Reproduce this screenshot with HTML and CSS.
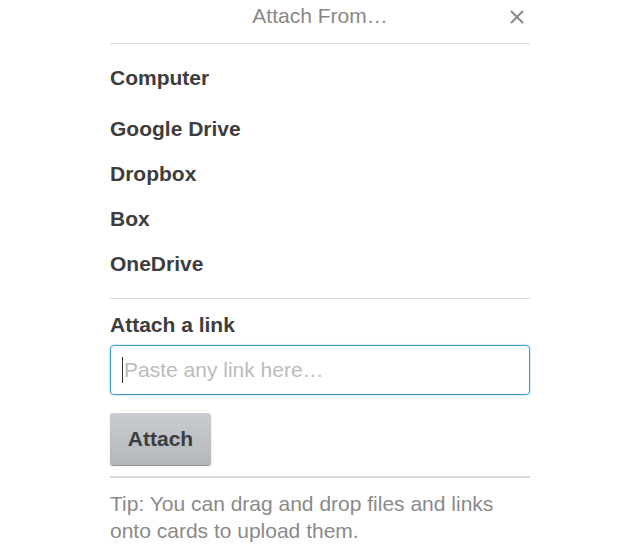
FILE: index.html
```html
<!DOCTYPE html>
<html>
<head>
<meta charset="utf-8">
<link rel="stylesheet" href="styles.css">
</head>
<body>
<div class="popover">
  <header class="head">
    <span class="title">Attach From…</span>
    <span class="close">
      <svg width="16" height="16" viewBox="0 0 16 16"><path d="M2 2 L14 14 M14 2 L2 14" stroke="#8a8a8a" stroke-width="2" fill="none"/></svg>
    </span>
  </header>
  <ul class="sources">
    <li class="first">Computer</li>
    <li>Google Drive</li>
    <li>Dropbox</li>
    <li>Box</li>
    <li>OneDrive</li>
  </ul>
  <hr class="sep">
  <div class="link-label">Attach a link</div>
  <div class="input"><span class="caret"></span><span class="ph">Paste any link here…</span></div>
  <button class="btn">Attach</button>
  <hr class="sep sep2">
  <p class="tip">Tip: You can drag and drop files and links onto cards to upload them.</p>
</div>
</body>
</html>
```
FILE: styles.css
```css
html, body { margin: 0; padding: 0; background: #fff; }
body { font-family: "Liberation Sans", Arial, sans-serif; }
.popover { width: 420px; margin: 0 auto; padding: 0; }
.head { position: relative; height: 43px; border-bottom: 1px solid #dcdcdc; display: flex; justify-content: center; }
.title { font-size: 21px; color: #888; line-height: 20px; margin-top: 6px; }
.close { position: absolute; right: 5px; top: 9px; width: 16px; height: 16px; }
.sources { list-style: none; margin: 0; padding: 0; }
.sources li { font-size: 21px; font-weight: bold; color: #3d3d3d; line-height: 24px; margin-top: 21px; }
.sources li.first { margin-top: 22px; }
.sources li:nth-child(2) { margin-top: 27px; }
.sep { border: 0; border-top: 1px solid #dcdcdc; margin: 22px 0 0 0; height: 0; }
.link-label { font-size: 21px; font-weight: bold; color: #3d3d3d; line-height: 24px; margin-top: 14px; }
.input { box-sizing: border-box; margin-top: 8px; height: 50px; border: 1px solid #3c9ad3; border-radius: 4px; box-shadow: 0 0 2px #7dbde6; display: flex; align-items: center; padding-left: 11px; }
.caret { width: 1px; height: 26px; background: #333; margin-right: 1px; }
.ph { font-size: 21px; color: #bbb; }
.btn { display: block; margin-top: 18px; width: 101px; height: 52px; border: 0; border-radius: 3px; background: linear-gradient(#c9cdd1, #b3b7bb); box-shadow: 0 1px 1px #8a8e92; font-family: "Liberation Sans", Arial, sans-serif; font-size: 21px; font-weight: bold; color: #3d3d3d; padding: 0; }
.sep2 { margin-top: 11px; border-top: 2px solid #d6dadd; }
.tip { margin: 12px 0 0 0; font-size: 21px; color: #8a8a8a; line-height: 27px; }
```
